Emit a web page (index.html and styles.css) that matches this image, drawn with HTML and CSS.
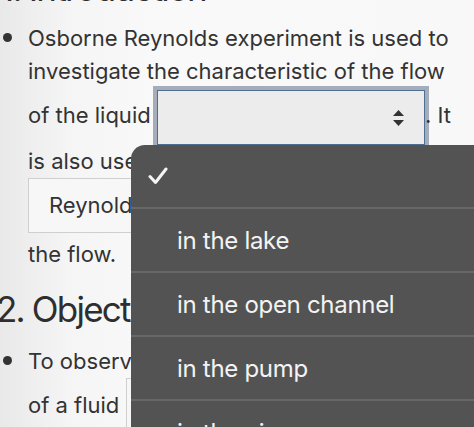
FILE: index.html
```html
<!DOCTYPE html>
<html>
<head>
<meta charset="utf-8">
<link rel="stylesheet" href="styles.css">
</head>
<body>
<div class="page">
  <h2 class="heading heading-intro">1. Introduction</h2>
  <ul class="list list-intro">
    <li class="item">
      <span class="dot"></span>
      <p class="text">Osborne Reynolds experiment is used to<br>investigate the characteristic of the flow<br>of the liquid <span class="select"><svg class="arrows" width="11" height="16" viewBox="0 0 11 16"><path d="M5.5 0 L11 6 H0 Z M5.5 16 L11 10 H0 Z" fill="#333"/></svg></span>. It<br>is also used to determine the<br><span class="box box-reynolds">Reynolds number</span> of<br>the flow.</p>
    </li>
  </ul>
  <h2 class="heading heading-obj">2. Objective</h2>
  <ul class="list">
    <li class="item">
      <span class="dot"></span>
      <p class="text">To observe the behaviour<br>of a fluid <span class="box box-empty"></span></p>
    </li>
  </ul>
</div>
<div class="menu">
  <div class="row row-check"><svg class="check" width="20" height="18" viewBox="0 0 20 18"><path d="M2 9.5 L7.5 15.5 L18 2" fill="none" stroke="#f4f4f4" stroke-width="3" stroke-linecap="round" stroke-linejoin="round"/></svg></div>
  <div class="row">in the lake</div>
  <div class="row">in the open channel</div>
  <div class="row">in the pump</div>
  <div class="row">in the pipe</div>
</div>
</body>
</html>
```
FILE: styles.css
```css
html, body {
  margin: 0;
  padding: 0;
  height: 100%;
  overflow: hidden;
}
body {
  font-family: "Inter", "Liberation Sans", sans-serif;
  color: #333333;
  background: linear-gradient(to right, #e9e9e9 0px, #f5f5f5 70px, #f9f9f9 160px, #f8f8f8 100%);
  position: relative;
}
.page {
  padding: 0;
}
.heading {
  font-weight: 400;
  font-size: 35px;
  line-height: 40px;
  margin: 0;
  letter-spacing: -1.8px;
  color: #2e2e2e;
}
.heading-intro {
  margin-top: -32px;
}
.heading-obj {
  margin-top: 18px;
  margin-bottom: 16px;
  margin-left: -4px;
}
.list {
  list-style: none;
  margin: 0;
  padding: 0;
}
.list-intro {
  margin-top: 14px;
}
.item {
  display: flex;
}
.dot {
  flex: 0 0 28px;
}
.dot::before {
  content: "";
  display: block;
  width: 9px;
  height: 9px;
  border-radius: 50%;
  background: #333;
  margin: 11px 0 0 3px;
}
.text {
  margin: 0;
  font-size: 22px;
  line-height: 33px;
  white-space: nowrap;
}
.select {
  display: inline-flex;
  align-items: center;
  justify-content: flex-end;
  box-sizing: border-box;
  width: 268px;
  height: 55px;
  margin-top: 2px;
  vertical-align: middle;
  background: #ececec;
  border: 1.5px solid #4f6e94;
  box-shadow: 0 0 0 4px #a5adba;
  padding-right: 20px;
}
.box {
  display: inline-flex;
  align-items: center;
  box-sizing: border-box;
  height: 55px;
  padding: 0 20px;
  vertical-align: middle;
  background: #f7f7f7;
  border: 1px solid #cfcfcf;
}
.box-reynolds {
  margin-bottom: 5px;
}
.box-empty {
  width: 260px;
  height: 58px;
}
.menu {
  position: absolute;
  left: 131px;
  top: 145px;
  right: 0;
  bottom: -40px;
  background: #535353;
  border-top-left-radius: 14px;
  color: #f3f3f3;
  font-family: "Inter", "Liberation Sans", sans-serif;
  font-size: 24px;
  letter-spacing: -0.3px;
}
.row {
  box-sizing: border-box;
  height: 64px;
  border-bottom: 2px solid #686868;
  display: flex;
  align-items: center;
  padding-left: 46px;
}
.row-check {
  padding-left: 17px;
}
```
